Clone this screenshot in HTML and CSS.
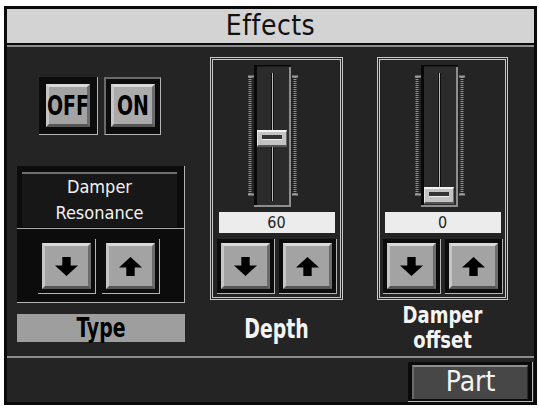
FILE: index.html
```html
<!DOCTYPE html>
<html lang="en">
<head>
    <meta charset="UTF-8">
    <title>Effects</title>
    <link rel="stylesheet" href="styles.css">
</head>
<body>
    <div class="screen">
        <div class="title">Effects</div>

        <div class="main">
            <!-- type column -->
            <div class="col col-type">
                <div class="toggles">
                    <div class="well well-off"><div class="key"><span class="tall">OFF</span></div></div>
                    <div class="well well-on"><div class="key"><span class="tall">ON</span></div></div>
                </div>
                <div class="type-box">
                    <div class="type-display">Damper<br>Resonance</div>
                    <div class="type-steps">
                        <div class="well well-sm"><div class="key key-arrow">
                            <svg width="23" height="19" viewBox="0 0 22 18"><path d="M7 0H15V8H22L11 18L0 8H7Z"/></svg>
                        </div></div>
                        <div class="well well-sm"><div class="key key-arrow">
                            <svg width="23" height="19" viewBox="0 0 22 18"><path d="M11 0L22 10H15V18H7V10H0Z"/></svg>
                        </div></div>
                    </div>
                </div>
                <div class="type-label"><span class="tall">Type</span></div>
            </div>

            <!-- depth column -->
            <div class="col col-depth">
                <div class="panel">
                    <div class="slider">
                        <svg width="50" height="142" viewBox="0 0 50 142">
                            <rect x="6" y="0" width="37" height="142" fill="#2b2b2b"/>
                            <path d="M6 0H43M7.5 0V142" stroke="#080808" stroke-width="3"/>
                            <path d="M42 2V142M6 141H43" stroke="#8e8e8e" stroke-width="2"/>
                            <path d="M23.5 8V136M25.5 8V136" stroke="#0e0e0e" stroke-width="1"/>
                            <path d="M24.5 8V136" stroke="#bdbdbd" stroke-width="1"/>
                            <path d="M2 12V129M47 12V129" stroke="#909090" stroke-width="3" stroke-dasharray="1 1"/>
                            <path d="M0 11.5H6M0 129.5H6M44 11.5H50M44 129.5H50" stroke="#9a9a9a" stroke-width="2"/>
                        </svg>
                        <div class="knob" style="top: 65px"><div class="knob-slot"></div></div>
                    </div>
                    <div class="value">60</div>
                    <div class="step-row">
                        <div class="well well-sm"><div class="key key-arrow">
                            <svg width="23" height="19" viewBox="0 0 22 18"><path d="M7 0H15V8H22L11 18L0 8H7Z"/></svg>
                        </div></div>
                        <div class="well well-sm"><div class="key key-arrow">
                            <svg width="23" height="19" viewBox="0 0 22 18"><path d="M11 0L22 10H15V18H7V10H0Z"/></svg>
                        </div></div>
                    </div>
                </div>
                <div class="label label-depth"><span class="tall">Depth</span></div>
            </div>

            <!-- damper offset column -->
            <div class="col col-offset">
                <div class="panel">
                    <div class="slider">
                        <svg width="50" height="142" viewBox="0 0 50 142">
                            <rect x="6" y="0" width="37" height="142" fill="#2b2b2b"/>
                            <path d="M6 0H43M7.5 0V142" stroke="#080808" stroke-width="3"/>
                            <path d="M42 2V142M6 141H43" stroke="#8e8e8e" stroke-width="2"/>
                            <path d="M23.5 8V136M25.5 8V136" stroke="#0e0e0e" stroke-width="1"/>
                            <path d="M24.5 8V136" stroke="#bdbdbd" stroke-width="1"/>
                            <path d="M2 12V129M47 12V129" stroke="#909090" stroke-width="3" stroke-dasharray="1 1"/>
                            <path d="M0 11.5H6M0 129.5H6M44 11.5H50M44 129.5H50" stroke="#9a9a9a" stroke-width="2"/>
                        </svg>
                        <div class="knob" style="top: 122px"><div class="knob-slot"></div></div>
                    </div>
                    <div class="value">0</div>
                    <div class="step-row">
                        <div class="well well-sm"><div class="key key-arrow">
                            <svg width="23" height="19" viewBox="0 0 22 18"><path d="M7 0H15V8H22L11 18L0 8H7Z"/></svg>
                        </div></div>
                        <div class="well well-sm"><div class="key key-arrow">
                            <svg width="23" height="19" viewBox="0 0 22 18"><path d="M11 0L22 10H15V18H7V10H0Z"/></svg>
                        </div></div>
                    </div>
                </div>
                <div class="label label-offset"><span class="tall">Damper</span><br><span class="tall">offset</span></div>
            </div>
        </div>

        <div class="footer">
            <div class="part-well"><div class="part">Part</div></div>
        </div>
    </div>
</body>
</html>
```

FILE: styles.css
```css
body {
    margin: 0;
    background: #fff;
    font-family: "DejaVu Sans Condensed", "DejaVu Sans", sans-serif;
    font-stretch: condensed;
}
.screen {
    margin: 6px 0 0 4px;
    width: 533px;
    height: 399px;
    box-sizing: border-box;
    border: 3px solid #0a0a0a;
    background: #242424;
    display: flex;
    flex-direction: column;
}
.title {
    height: 34px;
    flex: none;
    background: #d3d3d3;
    border-bottom: 2px solid #0a0a0a;
    box-shadow: 0 2px 0 #8e8e8e;
    text-align: center;
    font-size: 28px;
    letter-spacing: 0.5px;
    line-height: 34px;
    color: #111;
}
.tall {
    display: inline-block;
    transform: scaleY(1.3);
}
.main {
    height: 311px;
    flex: none;
    box-sizing: border-box;
    padding: 12px 0 0 10px;
    display: flex;
}
.col {
    display: flex;
    flex-direction: column;
}
.col-type {
    width: 168px;
    margin-right: 25px;
}
.col-depth {
    width: 133px;
    margin-right: 34px;
}
.col-offset {
    width: 131px;
}

/* buttons */
.well {
    background: #0c0c0c;
    border-right: 1px solid #b4b4b4;
    border-bottom: 1px solid #b4b4b4;
}
.key {
    box-sizing: border-box;
    background: #a3a3a3;
    border-top: 3px solid #d9d9d9;
    border-left: 3px solid #c6c6c6;
    border-bottom: 3px solid #565656;
    border-right: 3px solid #6c6c6c;
    display: flex;
    align-items: center;
    justify-content: center;
    color: #000;
    font-weight: bold;
    font-size: 21px;
}
.toggles {
    margin-top: 20px;
    padding-left: 22px;
    display: flex;
    gap: 6px;
}
.well-off,
.well-on {
    padding: 7px;
}
.well-on {
    padding: 5px;
    border-top: 2px solid #6a6a6a;
    border-left: 2px solid #6a6a6a;
}
.well-off .key,
.well-on .key {
    width: 44px;
    height: 43px;
}
.well-on .key {
    background: #ababab;
}
.well-sm {
    padding: 4px;
}
.key-arrow {
    width: 49px;
    height: 46px;
}
.key-arrow svg {
    fill: #000;
}

/* type selector */
.type-box {
    margin-top: 31px;
    height: 137px;
    box-sizing: border-box;
    background: #0c0c0c;
    border-right: 1px solid #b4b4b4;
    border-bottom: 1px solid #b4b4b4;
}
.type-display {
    margin: 6px 7px 0 5px;
    height: 55px;
    box-sizing: border-box;
    background: #171717;
    border-top: 2px solid #707070;
    color: #f2f2f2;
    font-size: 18px;
    line-height: 26px;
    text-align: center;
}
.type-steps {
    margin-top: 1px;
    border-top: 1px solid #a8a8a8;
    padding: 10px 0 0 21px;
    display: flex;
    gap: 6px;
}
.type-label {
    margin-top: 11px;
    height: 28px;
    background: #9e9e9e;
    color: #000;
    font-weight: bold;
    font-size: 21px;
    line-height: 28px;
    text-align: center;
}

/* slider panels */
.panel {
    height: 243px;
    box-sizing: border-box;
    border: 3px double #c8c8c8;
}
.slider {
    position: relative;
    width: 50px;
    height: 142px;
    margin: 5px 0 0 35px;
}
.slider svg {
    display: block;
}
.knob {
    position: absolute;
    left: 9px;
    width: 30px;
    height: 17px;
    box-sizing: border-box;
    background: #c3c3c3;
    border-top: 2px solid #f2f2f2;
    border-left: 1px solid #e2e2e2;
    border-bottom: 2px solid #555;
    border-right: 1px solid #6a6a6a;
}
.knob-slot {
    margin: 3px auto 0;
    width: 20px;
    height: 4px;
    background: #333;
    border-bottom: 1px solid #eee;
}
.value {
    margin: 5px auto 0;
    width: 116px;
    height: 21px;
    background: #ececec;
    color: #222;
    font-size: 16px;
    line-height: 21px;
    text-align: center;
}
.step-row {
    margin-top: 6px;
    display: flex;
    justify-content: center;
    gap: 4px;
}
.label {
    color: #f4f4f4;
    font-weight: bold;
    text-align: center;
    line-height: 26px;
}
.label-depth {
    margin-top: 16px;
    font-size: 21px;
}
.label-offset {
    margin-top: 3px;
    font-size: 20px;
    line-height: 25px;
}
.label-offset .tall {
    transform: scaleY(1.15);
}

/* footer */
.footer {
    flex: 1;
    border-top: 2px solid #8c8c8c;
    display: flex;
    justify-content: flex-end;
    align-items: flex-start;
    padding: 4px 1px 0 0;
}
.part-well {
    padding: 3px 4px 2px 4px;
    background: #0a0a0a;
    border-right: 1px solid #bbb;
    border-bottom: 1px solid #bbb;
}
.part {
    width: 116px;
    height: 34px;
    box-sizing: border-box;
    background: #474747;
    border-top: 2px solid #8e8e8e;
    border-left: 2px solid #6a6a6a;
    border-right: 1px solid #2a2a2a;
    color: #f4f4f4;
    font-size: 28px;
    line-height: 30px;
    text-align: center;
}
```
